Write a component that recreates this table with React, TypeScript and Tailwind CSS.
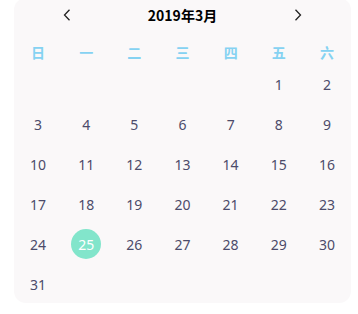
import React from 'react'

const WEEKDAYS = ['日', '一', '二', '三', '四', '五', '六']

// March 2019 starts on a Friday
const FIRST_WEEKDAY = 5
const DAYS_IN_MONTH = 31
const SELECTED = 25

function Chevron({ dir }: { dir: 'left' | 'right' }) {
  return (
    <svg width="8" height="12" viewBox="0 0 8 12" fill="none">
      <polyline
        points={dir === 'left' ? '6.5,0.8 1.5,6 6.5,11.2' : '1.5,0.8 6.5,6 1.5,11.2'}
        stroke="#222"
        strokeWidth="1.3"
        strokeLinejoin="miter"
      />
    </svg>
  )
}

export default function App() {
  const cells: (number | null)[] = []
  for (let i = 0; i < FIRST_WEEKDAY; i++) cells.push(null)
  for (let d = 1; d <= DAYS_IN_MONTH; d++) cells.push(d)
  while (cells.length % 7 !== 0) cells.push(null)

  return (
    <div className="w-[358px] h-[314px] bg-white overflow-hidden">
      <div
        className="ml-[14px] mt-[-2px] w-[337px] h-[305px] bg-[#faf8f9] rounded-[12px]"
        style={{ fontFamily: '"Noto Sans", "Noto Sans CJK SC", sans-serif' }}
      >
        {/* Month switcher */}
        <div className="h-[36px] pb-[2px] px-[49px] flex items-center justify-between">
          <Chevron dir="left" />
          <span
            className="text-[14px] font-bold text-black leading-none"
            style={{ fontFamily: '"Noto Sans CJK SC", sans-serif' }}
          >
            2019年3月
          </span>
          <Chevron dir="right" />
        </div>

        {/* Weekday labels */}
        <div className="h-[30px] pt-[6px] grid grid-cols-7">
          {WEEKDAYS.map(w => (
            <div
              key={w}
              className="flex items-center justify-center text-[14px] font-bold text-[#85d2f2]"
              style={{ fontFamily: '"Noto Sans CJK SC", sans-serif' }}
            >
              {w}
            </div>
          ))}
        </div>

        {/* Days */}
        <div className="grid grid-cols-7">
          {cells.map((d, i) => (
            <div key={i} className="h-[40px] flex items-center justify-center">
              {d !== null &&
                (d === SELECTED ? (
                  <span className="w-[30px] h-[30px] rounded-full bg-[#82e5cb] text-white text-[14px] flex items-center justify-center">
                    {d}
                  </span>
                ) : (
                  <span className="text-[14px] text-[#4c4b6a]">{d}</span>
                ))}
            </div>
          ))}
        </div>
      </div>
    </div>
  )
}
